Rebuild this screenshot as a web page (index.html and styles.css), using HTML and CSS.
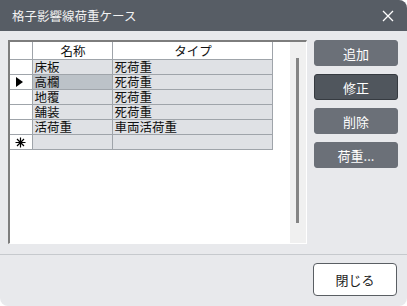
FILE: index.html
```html
<!DOCTYPE html>
<html lang="ja">
<head>
  <meta charset="UTF-8" />
  <title>格子影響線荷重ケース</title>
  <link rel="stylesheet" href="styles.css">
</head>
<body>
  <div class="window">
    <div class="titlebar">
      <span class="title">格子影響線荷重ケース</span>
      <svg class="close" width="12" height="12" viewBox="0 0 12 12">
        <path d="M1 1 L11 11 M11 1 L1 11" stroke="#fff" stroke-width="1.3" fill="none" />
      </svg>
    </div>

    <div class="content">
      <div class="grid">
        <div class="sheet">
          <table>
            <colgroup>
              <col class="c-head" />
              <col class="c-name" />
              <col class="c-type" />
            </colgroup>
            <tr class="hdr">
              <th></th>
              <th>名称</th>
              <th>タイプ</th>
            </tr>
            <tr>
              <td class="rh"></td>
              <td>床板</td>
              <td>死荷重</td>
            </tr>
            <tr>
              <td class="rh"><span class="arrow"></span></td>
              <td class="sel">高欄</td>
              <td>死荷重</td>
            </tr>
            <tr>
              <td class="rh"></td>
              <td>地覆</td>
              <td>死荷重</td>
            </tr>
            <tr>
              <td class="rh"></td>
              <td>舗装</td>
              <td>死荷重</td>
            </tr>
            <tr>
              <td class="rh"></td>
              <td>活荷重</td>
              <td>車両活荷重</td>
            </tr>
            <tr>
              <td class="rh">
                <svg class="star" width="11" height="11" viewBox="0 0 11 11">
                  <path d="M5.5 0.5 V10.5 M0.5 5.5 H10.5 M2 2 L9 9 M9 2 L2 9" stroke="#000" stroke-width="1.2" fill="none" />
                </svg>
              </td>
              <td></td>
              <td></td>
            </tr>
          </table>
        </div>
        <div class="vscroll"><div class="thumb"></div></div>
      </div>

      <div class="actions">
        <button class="btn">追加</button>
        <button class="btn focus">修正</button>
        <button class="btn">削除</button>
        <button class="btn">荷重...</button>
      </div>
    </div>

    <div class="footer">
      <button class="close-btn">閉じる</button>
    </div>
  </div>
</body>
</html>
```

FILE: styles.css
```css
body {
  margin: 0;
  background: #fff;
  font-family: "Noto Sans CJK JP", "Noto Sans", sans-serif;
}

.window {
  width: 407px;
  height: 306px;
  background: #e8e9ec;
  border-radius: 0 8px 8px 8px;
  overflow: hidden;
  display: flex;
  flex-direction: column;
}

.titlebar {
  height: 31px;
  background: #575d65;
  display: flex;
  align-items: center;
  justify-content: space-between;
  padding: 0 13px 0 12px;
  color: #f2f2f2;
}

.title {
  font-size: 12.5px;
}

.close {
  display: block;
}

.content {
  height: 214px;
  padding: 9px 9px 0 8px;
  display: flex;
  gap: 7px;
  border-bottom: 1px solid #c6c9cd;
}

.grid {
  width: 296px;
  height: 201px;
  border-top: 2px solid #7d7d7d;
  border-left: 2px solid #7d7d7d;
  border-right: 1px solid #fff;
  border-bottom: 1px solid #fff;
  display: flex;
  background: #fff;
}

.sheet {
  flex: 1;
  background: #fff;
}

table {
  border-collapse: collapse;
  font-size: 12.5px;
  color: #111;
  line-height: 14px;
}

col.c-head { width: 22px; }
col.c-name { width: 80px; }
col.c-type { width: 160px; }

th, td {
  border: 1px solid #9fa4aa;
  padding: 0 0 0 2px;
  white-space: nowrap;
  text-align: left;
  font-weight: normal;
}

tr:first-child th {
  border-top: none;
}

tr th:first-child,
tr td:first-child {
  border-left: none;
}

.hdr th {
  height: 17px;
  background: #fff;
  text-align: center;
}

td {
  height: 14px;
  background: #dfe1e5;
}

td.rh {
  background: #fff;
  position: relative;
}

td.sel {
  background: #bcc2c8;
}

.arrow {
  position: absolute;
  left: 6px;
  top: 2px;
  border-left: 7px solid #000;
  border-top: 5px solid transparent;
  border-bottom: 5px solid transparent;
}

.star {
  display: block;
  margin-left: 3px;
}

.vscroll {
  width: 16px;
  background: #f0f0f0;
  display: flex;
  justify-content: center;
  padding-top: 16px;
}

.thumb {
  width: 3px;
  height: 165px;
  background: #858585;
  margin-right: 1px;
}

.actions {
  display: flex;
  flex-direction: column;
  gap: 8px;
}

.btn {
  width: 84px;
  height: 26px;
  border: 1px solid #6b7078;
  border-radius: 3px;
  background: #6b7078;
  color: #fff;
  font-family: inherit;
  font-size: 13px;
  padding: 0;
}

.btn.focus {
  background: #50565d;
  border-color: #363b41;
}

.footer {
  flex: 1;
  display: flex;
  justify-content: flex-end;
  align-items: flex-start;
  padding: 8px 10px 0 0;
}

.close-btn {
  width: 84px;
  height: 33px;
  background: #fff;
  border: 1px solid #5a5e63;
  border-radius: 4px;
  font-family: inherit;
  font-size: 13px;
  color: #222;
  padding: 0;
}
```
